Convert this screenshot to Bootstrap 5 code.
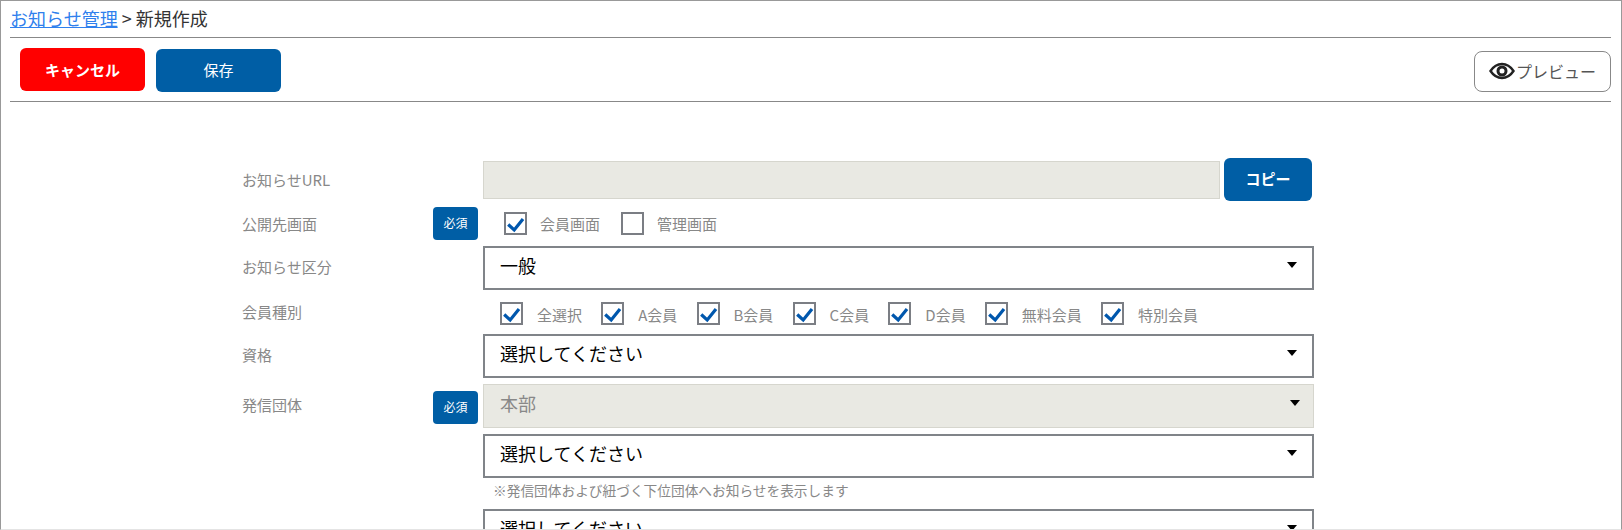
<!DOCTYPE html>
<html lang="ja">
<head>
<meta charset="utf-8">
<title>新規作成</title>
<link href="https://cdn.jsdelivr.net/npm/bootstrap@5.3.0/dist/css/bootstrap.min.css" rel="stylesheet">
<style>
html,body{height:100%;overflow:hidden}
body{font-family:"Noto Sans CJK JP","Noto Sans",sans-serif;background:#fff;color:#333}
.frame{height:530px;border:1px solid #999;border-bottom-color:#e4e4e4;padding:0 10px 0 9px;overflow:hidden}
.crumb{height:37px;font-size:18px;line-height:35px;border-bottom:1px solid #888;white-space:nowrap}
.crumb a{color:#2f80ed}
.bar{height:64px;border-bottom:1px solid #888;padding:0 0 0 10px}
.act{width:125px;height:43px;border:0;border-radius:6px;color:#fff;font-size:15px;line-height:1;padding:0}
.act:hover{color:#fff}
.act-red{background:#f00;font-weight:700;margin-top:10px}
.act-blue{background:#005ea5;margin-top:11px;margin-left:11px;padding-bottom:2px}
.act-prev{width:137px;height:41px;margin-top:13px;border:1px solid #888;border-radius:8px;background:#fff;color:#555;font-size:16px;padding:0 0 2px;gap:1px}
.sheet{width:1080px;margin:56px 0 0 232px}
.line{display:flex;align-items:flex-start}
.lbl{width:191px;flex:none;color:#888;font-size:15px;line-height:20px;white-space:nowrap}
.lbl-top{padding-top:11px}
.lbl-req{padding-top:7px}
.req{width:45px;height:33px;flex:none;background:#005ea5;color:#fff;border-radius:4px;font-size:12px;line-height:31px;text-align:center;margin-right:5px}
.req-low{margin-top:7px}
.nogap{width:50px;flex:none}
.main{width:831px;flex:none}
.row-url{height:43px}
.row-pub{height:33px;padding-left:21px;gap:21px}
.row-kind{height:23px;padding-left:17px;gap:19.2px}
.gap6{margin-top:6px}
.gap12{margin-top:12px}
.gap9{margin-top:9px}
.url,.url:disabled{width:737px;height:38px;background:#e9e9e3;border:1px solid #d6d6ce;border-radius:0}
.copy{width:88px;height:43px;background:#005ea5;color:#fff;border:0;border-radius:6px;font-weight:700;font-size:15px;padding:0;margin-left:4px}
.copy:hover{color:#fff;background:#005ea5}
.pick{height:44px;border:2px solid #808489;border-radius:0;font-size:18px;line-height:24px;color:#000;padding:4px 40px 10px 15px;background-color:#fff;
background-image:url("data:image/svg+xml,%3Csvg xmlns='http://www.w3.org/2000/svg' width='10' height='6'%3E%3Cpath d='M0 0h10L5 6z' fill='%23000'/%3E%3C/svg%3E");background-size:10px 6px;background-position:right 15px top 14px}
.pick:disabled{background-color:#e9e9e3;border:1px solid #d6d6ce;color:#888;padding-left:16px;background-position:right 13px top 15px;
background-image:url("data:image/svg+xml,%3Csvg xmlns='http://www.w3.org/2000/svg' width='10' height='6'%3E%3Cpath d='M0 0h10L5 6z' fill='%23000'/%3E%3C/svg%3E")}
.chk{display:flex;align-items:center;color:#888;font-size:15px;line-height:20px;white-space:nowrap;margin:0}
.cap{padding-top:3px}
.box{appearance:none;width:23px;height:23px;flex:none;border:2px solid #7b7e84;background:#fff;margin:0 14px 0 0;display:block}
.row-pub .box{margin-right:13px}
.box:checked{background:#fff url("data:image/svg+xml,%3Csvg xmlns='http://www.w3.org/2000/svg' viewBox='0 0 19 19'%3E%3Cpath d='M2.200 10.500l6 5.500L17 5' fill='none' stroke='%230057ad' stroke-width='3.200'/%3E%3C/svg%3E") center/100% no-repeat}
.note{font-size:13.7px;line-height:18px;color:#888;margin:3px 0 0 10px}
.pick-note{margin-top:10px}
</style>
</head>
<body>
<div class="frame">
  <div class="crumb"><a href="#">お知らせ管理</a> &gt; 新規作成</div>
  <div class="bar d-flex align-items-start">
    <button class="btn act act-red" type="button">キャンセル</button>
    <button class="btn act act-blue" type="button">保存</button>
    <button class="btn act-prev ms-auto d-flex align-items-center justify-content-center" type="button">
      <svg width="26" height="18" viewBox="0 0 26 18" aria-hidden="true"><path d="M1.500 9C4.500 4.500 8.500 2 13 2s8.500 2.500 11.500 7C21.500 13.500 17.500 16 13 16S4.500 13.500 1.500 9z" fill="none" stroke="#222" stroke-width="2.400"/><circle cx="13" cy="9" r="4" fill="none" stroke="#222" stroke-width="3"/></svg>
      <span>プレビュー</span>
    </button>
  </div>
  <div class="sheet">
    <div class="line align-items-center row-url">
      <div class="lbl">お知らせURL</div><div class="nogap"></div>
      <div class="d-flex align-items-center main"><input class="form-control url" type="text" disabled aria-label="お知らせURL"><button class="btn copy" type="button">コピー</button></div>
    </div>
    <div class="line gap6">
      <div class="lbl lbl-req">公開先画面</div><div class="req">必須</div>
      <div class="main d-flex align-items-center row-pub">
        <label class="chk"><input class="box" type="checkbox" checked><span>会員画面</span></label>
        <label class="chk"><input class="box" type="checkbox"><span>管理画面</span></label>
      </div>
    </div>
    <div class="line gap6">
      <div class="lbl lbl-top">お知らせ区分</div><div class="nogap"></div>
      <div class="main"><select class="form-select pick" aria-label="お知らせ区分"><option>一般</option></select></div>
    </div>
    <div class="line gap12">
      <div class="lbl">会員種別</div><div class="nogap"></div>
      <div class="main d-flex align-items-center row-kind">
        <label class="chk"><input class="box" type="checkbox" checked><span class="cap">全選択</span></label>
        <label class="chk"><input class="box" type="checkbox" checked><span class="cap">A会員</span></label>
        <label class="chk"><input class="box" type="checkbox" checked><span class="cap">B会員</span></label>
        <label class="chk"><input class="box" type="checkbox" checked><span class="cap">C会員</span></label>
        <label class="chk"><input class="box" type="checkbox" checked><span class="cap">D会員</span></label>
        <label class="chk"><input class="box" type="checkbox" checked><span class="cap">無料会員</span></label>
        <label class="chk"><input class="box" type="checkbox" checked><span class="cap">特別会員</span></label>
      </div>
    </div>
    <div class="line gap9">
      <div class="lbl lbl-top">資格</div><div class="nogap"></div>
      <div class="main"><select class="form-select pick" aria-label="資格"><option>選択してください</option></select></div>
    </div>
    <div class="line gap6">
      <div class="lbl lbl-top">発信団体</div><div class="req req-low">必須</div>
      <div class="main">
        <select class="form-select pick" disabled aria-label="発信団体"><option>本部</option></select>
        <select class="form-select pick gap6" aria-label="発信団体"><option>選択してください</option></select>
        <div class="note">※発信団体および紐づく下位団体へお知らせを表示します</div>
        <select class="form-select pick pick-note" aria-label="発信団体"><option>選択してください</option></select>
      </div>
    </div>
  </div>
</div>
</body>
</html>
